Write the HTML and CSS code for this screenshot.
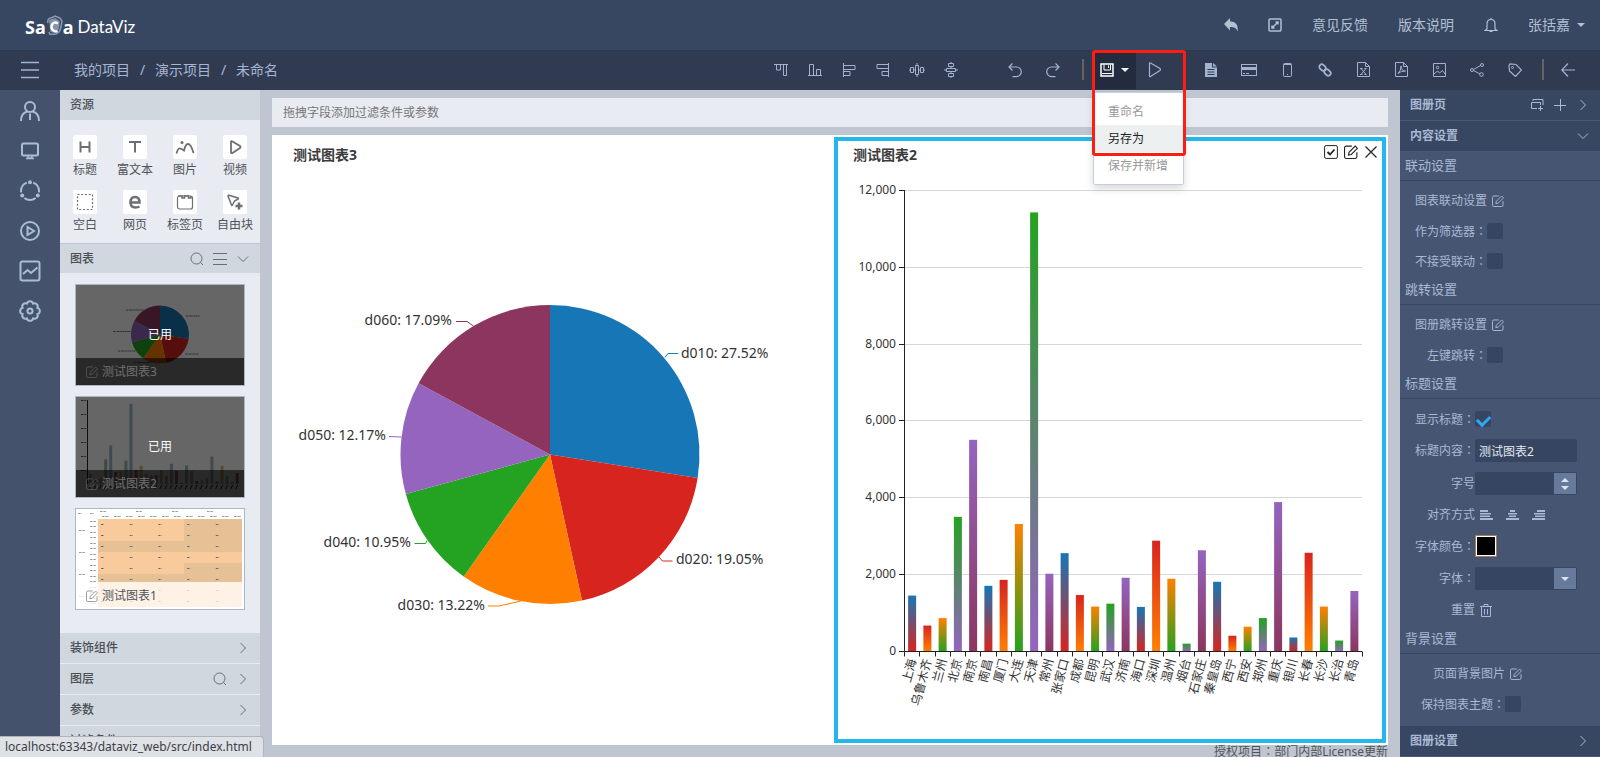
FILE: index.html
```html
<!doctype html>
<html lang="zh-CN">
    <head>
        <meta charset="UTF-8" />
        <meta name="viewport" content="width=device-width, initial-scale=1.0" />
        <title>SaCa DataViz</title>
        <link rel="stylesheet" href="styles.css">
    </head>
    <body>
        <!-- shared icons -->
        <svg class="sprite" aria-hidden="true">
            <symbol id="i-edit" viewBox="1 .5 12.500 12.500">
                <path d="M8 1.5H3A1.5 1.5 0 0 0 1.5 3v8A1.5 1.5 0 0 0 3 12.500h8A1.500 1.500 0 0 0 12.500 11V7" />
                <path d="M5 9.500l.5-2.500 5.500-5.500 2 2L7.500 9z" />
            </symbol>
            <symbol id="i-search" viewBox="0 0 14 14">
                <circle cx="6.500" cy="6.500" r="5.500" />
                <path d="M10.500 10.500l2.500 2.500" />
            </symbol>
            <symbol id="i-right" viewBox="0 0 14 14">
                <path d="M4.500 2l5 5-5 5" />
            </symbol>
            <symbol id="i-down" viewBox="0 0 14 14">
                <path d="M2 4.500l5 5 5-5" />
            </symbol>
        </svg>

        <header class="topbar">
            <div class="logo">
                <b>Sa</b>
                <svg width="17" height="20" viewBox="0 0 17 20">
                    <path d="M2 8Q1 3 6 2.500L9 1l5 2 2 3-1 6-1.500 4.500L10 19l-6 .5L3 17" fill="none" stroke="#8f9cb0" stroke-width="1.500" />
                    <path d="M3 5l6-2 4.500 3v4l-1 5-4 3-4-1z" fill="#8593a9" stroke="none" />
                    <path d="M12 8.500Q7.500 6 6 10t1.500 5.500q2 1.500 4 .5" fill="none" stroke="#fff" stroke-width="2.500" />
                </svg>
                <b>a</b>
                <span class="logo-name">DataViz</span>
            </div>
            <nav class="top-links">
                <button aria-label="返回">
                    <svg width="14" height="14" viewBox="0 0 14 14"><path class="fill" d="M6 0v3.500c6 0 8.500 3.500 7.500 10-1-3.500-3-4.500-7.500-4.500v3.500L0 6z" /></svg>
                </button>
                <button aria-label="全屏">
                    <svg width="14" height="14" viewBox="0 0 14 14"><rect x="1" y="1" width="12" height="12" rx="1" stroke-width="1.500" /><path d="M4 10l6-6M7.500 4H10v2.500M4 7.500V10h2.500" stroke-width="1.500" /></svg>
                </button>
                <a href="#">意见反馈</a>
                <a href="#">版本说明</a>
                <button aria-label="通知">
                    <svg width="14" height="16" viewBox="0 0 14 16"><path d="M7 1v1M3 12V7q0-4.500 4-4.500T11 7v5l2 1.500H1zM5.500 14.500h3" stroke-width="1.200" /></svg>
                </button>
                <button class="user">张括嘉 <i class="caret"></i></button>
            </nav>
        </header>

        <div class="toolbar">
            <button class="menu-btn" aria-label="菜单">
                <svg width="20" height="18" viewBox="0 0 20 18"><path d="M1 1.500h18M1 9h18M1 16.500h18" stroke-width="1.500" /></svg>
            </button>
            <div class="crumbs">
                <a href="#">我的项目</a><span>/</span><a href="#">演示项目</a><span>/</span><a href="#">未命名</a>
            </div>

            <div class="tools align-tools">
                <button aria-label="上对齐"><svg width="14" height="14" viewBox="0 0 14 14"><path d="M0 1.500h14M2.500 2v5h4V2M9.500 2v10.500h3V2" /></svg></button>
                <button aria-label="下对齐"><svg width="14" height="14" viewBox="0 0 14 14"><path d="M0 12.500h14M1.500 12V1.500h4V12M8.500 12V6.500h4V12" /></svg></button>
                <button aria-label="左对齐"><svg width="14" height="14" viewBox="0 0 14 14"><path d="M1.500 0v14M2 2.500h11v4H2M2 8.500h6v4H2" /></svg></button>
                <button aria-label="右对齐"><svg width="14" height="14" viewBox="0 0 14 14"><path d="M12.500 0v14M12 1.500H1v4h11M12 8.500H6v4h6" /></svg></button>
                <button aria-label="水平居中"><svg width="16" height="14" viewBox="0 0 16 14"><path d="M1.500 4.500h3v5h-3zM6.500 2.500h3v9h-3zM11.500 4.500h3v5h-3zM4.500 7h2M9.500 7h2M8 0v2M8 12v2M0 7h1M15 7h1" /></svg></button>
                <button aria-label="垂直居中"><svg width="14" height="16" viewBox="0 0 14 16"><path d="M4.500 1.500h5v3h-5zM2.500 6.500h9v3h-9zM4.500 11.500h5v3h-5zM7 4.500v2M7 9.500v2M0 8h2M12 8h2M7 0v1M7 15v1" /></svg></button>
            </div>
            <div class="tools">
                <button aria-label="撤销"><svg width="16" height="16" viewBox="0 0 16 16"><path d="M5.500 1.500L2 5l3.500 3.500M2 5h7.500a4.800 4.800 0 0 1 0 9.600H5.500" stroke-width="1.200" /></svg></button>
                <button aria-label="重做"><svg width="16" height="16" viewBox="0 0 16 16"><path d="M10.500 1.500L14 5l-3.500 3.500M14 5H6.500a4.800 4.800 0 0 0 0 9.600h4" stroke-width="1.200" /></svg></button>
            </div>
            <i class="divider"></i>
            <div class="save-wrap">
                <button class="save-btn" aria-label="保存">
                    <svg width="14" height="14" viewBox="0 0 14 14"><path d="M1 1h12v12H1z" stroke-width="1.500" /><path d="M4 1.500v5.500h6.500V1.500M8.500 2.500v2.500M2 10.500h10" /></svg>
                    <i class="caret"></i>
                </button>
                <ul class="dropdown">
                    <li><button>重命名</button></li>
                    <li class="active"><button>另存为</button></li>
                    <li><button>保存并新增</button></li>
                </ul>
                <div class="highlight"></div>
            </div>
            <div class="tools play">
                <button aria-label="预览"><svg width="14" height="16" viewBox="0 0 14 16"><path d="M1.500 1.500q0-1 1-.5L12 6.500q1 1 0 2L2.500 14.500q-1 .5-1-.5z" stroke-width="1.200" /></svg></button>
            </div>
            <div class="tools">
                <button aria-label="文档"><svg width="12" height="14" viewBox="0 0 12 14"><path class="fill" fill-rule="evenodd" d="M0 0h7v4.500h5V14H0zM8 0l4 3.500H8zM2.500 6v1h7V6zM2.500 8.500v1h7v-1zM2.500 11v1h7v-1z" /></svg></button>
                <button aria-label="卡片"><svg width="16" height="12" viewBox="0 0 16 12"><rect x=".5" y=".5" width="15" height="11" /><path class="fill" d="M0 3h16v3H0zM2 9h2v1H2zM5 9h3v1H5z" /></svg></button>
                <button aria-label="手机"><svg width="9" height="14" viewBox="0 0 9 14"><rect x=".5" y=".5" width="8" height="13" rx="1" /><path d="M1 1.500h7M4 11.500h1" /></svg></button>
                <button aria-label="链接"><svg width="14" height="14" viewBox="0 0 14 14"><g stroke-width="1.800"><rect x="1" y="2" width="7" height="5" rx="2.500" transform="rotate(45 4.500 4.500)" /><rect x="6" y="7" width="7" height="5" rx="2.500" transform="rotate(45 9.500 9.500)" /></g></svg></button>
                <button aria-label="导出Excel"><svg width="13" height="15" viewBox="0 0 13 15"><path d="M.5 .5h8l4 4v10H.5zM8.500 .5v4h4" /><path d="M4 6.500l5 6M9 6.500l-5 6M3 6.500h2.500M7.500 6.500h2M3 12.500h2.500M7.500 12.500h2" /></svg></button>
                <button aria-label="导出PDF"><svg width="13" height="15" viewBox="0 0 13 15"><path d="M.5 .5h8l4 4v10H.5zM8.500 .5v4h4" /><path d="M3 11.500q3-2.500 3-7.500 1 6 4.500 5-4-.5-7.500 2.500z" /></svg></button>
                <button aria-label="导出图片"><svg width="13" height="14" viewBox="0 0 13 14"><path d="M.5 .5h12v13H.5zM1 11l3.500-3 2 2 3-2.500L12 11" /><circle cx="4.500" cy="4.500" r="1.200" /></svg></button>
                <button aria-label="分享"><svg width="14" height="14" viewBox="0 0 14 14"><circle cx="2" cy="7" r="1.500" /><circle cx="12" cy="2" r="1.500" /><circle cx="11.500" cy="11.500" r="1.800" /><path d="M3.500 6.500l7-4M3.500 7.500l6.500 3.500" /></svg></button>
                <button aria-label="标签"><svg width="14" height="14" viewBox="0 0 14 14"><path d="M1 2.500l1-1.500 6 .5 5.500 5.500-6 6.500L1.500 8z" stroke-width="1.200" /><circle cx="4.500" cy="4.500" r="1" /></svg></button>
            </div>
            <i class="divider last"></i>
            <div class="tools back">
                <button aria-label="后退"><svg width="14" height="14" viewBox="0 0 14 14"><path d="M7 .5L.8 7 7 13.500M1 7h13" stroke-width="1.200" /></svg></button>
            </div>
        </div>

        <div class="layout">
            <nav class="sidenav">
                <button aria-label="用户"><svg width="22" height="22" viewBox="0 0 22 22"><circle cx="11" cy="7" r="5" /><path d="M2 21q0-8 6.500-9.500M20 21q0-8-6.500-9.500M11 13.500V20" /></svg></button>
                <button aria-label="大屏"><svg width="20" height="18" viewBox="0 0 20 18"><rect x="2" y="1.500" width="16" height="12" rx="1.500" /><path d="M8 14v2h4v-2M6 16.500h8" stroke-width="1.500" /></svg></button>
                <button aria-label="关系"><svg width="22" height="22" viewBox="0 0 22 22"><circle cx="11" cy="11" r="9" pathLength="120" stroke-dasharray="26 14" stroke-dashoffset="-7" transform="rotate(-90 11 11)" /><circle class="fill" cx="11" cy="2.200" r="2" /><circle class="fill" cx="3.200" cy="15.500" r="2" /><circle class="fill" cx="18.800" cy="15.500" r="2" /></svg></button>
                <button aria-label="播放"><svg width="22" height="22" viewBox="0 0 22 22"><circle cx="11" cy="11" r="9" /><path d="M8.500 7v8l6.500-4z" /></svg></button>
                <button aria-label="图表"><svg width="22" height="22" viewBox="0 0 22 22"><rect x="1.500" y="1.500" width="19" height="19" rx="2" /><path d="M4 14l4.500-4 3.500 3 6.500-5.500" /></svg></button>
                <button aria-label="设置"><svg width="22" height="22" viewBox="0 0 22 22"><circle cx="11" cy="11" r="2.500" /><path d="M18.400 14.100A3.200 3.200 0 0 1 14.100 18.400A3.200 3.200 0 0 1 7.900 18.400A3.200 3.200 0 0 1 3.600 14.100A3.200 3.200 0 0 1 3.600 7.900A3.200 3.200 0 0 1 7.900 3.600A3.200 3.200 0 0 1 14.100 3.600A3.200 3.200 0 0 1 18.400 7.900A3.200 3.200 0 0 1 18.400 14.100z" /></svg></button>
            </nav>

            <aside class="resources">
                <h2 class="bar">资源</h2>
                <div class="res-grid">
                    <button><span class="tile"><svg width="18" height="18" viewBox="0 0 18 18"><path d="M4.500 3.500v11M13.500 3.500v11M4.500 9h9" stroke-width="2" /></svg></span>标题</button>
                    <button><span class="tile"><svg width="18" height="18" viewBox="0 0 18 18"><path d="M3 4h12M9 4v10.500" stroke-width="2" /></svg></span>富文本</button>
                    <button><span class="tile"><svg width="20" height="18" viewBox="0 0 20 18"><path d="M1.500 15.500q1.500-5.500 3.500-5t4 2q1.500-6.500 4-6.500 3 0 5.500 9" stroke-width="1.800" /><circle class="fill" cx="7" cy="4.500" r="1.500" /></svg></span>图片</button>
                    <button><span class="tile"><svg width="18" height="18" viewBox="0 0 18 18"><path d="M5 3.500q.5-.8 1.500 0L14 8q1 1 0 2l-7.500 5q-1 .5-1.500-.5z" stroke-width="1.800" /></svg></span>视频</button>
                    <button><span class="tile"><svg width="18" height="18" viewBox="0 0 18 18"><rect x="1.500" y="1.500" width="15" height="15" stroke-dasharray="2 1.750" stroke-width="1.200" /></svg></span>空白</button>
                    <button><span class="tile"><svg width="18" height="18" viewBox="0 0 18 18"><path d="M4.500 9.500h9q0-5.500-4.500-5.500t-4.500 5.500q0 5 5 5 2 0 4-1" stroke-width="2.500" /></svg></span>网页</button>
                    <button><span class="tile"><svg width="18" height="18" viewBox="0 0 18 18"><rect x="1.500" y="3" width="15" height="13" rx="2" stroke-width="1.200" /><path d="M2 3h4v2h2.500V3h4v2H15V3" stroke-width="1.500" /></svg></span>标签页</button>
                    <button><span class="tile"><svg width="18" height="18" viewBox="0 0 18 18"><path d="M2 3q0-1 1-.7l9 2.700q.8.500 0 1L8.500 8l-2 4q-.5.800-1 0z" stroke-width="1.500" /><path d="M13 9.500v7M9.500 13h7" stroke-width="2.500" /></svg></span>自由块</button>
                </div>
                <h2 class="bar ruled">图表
                    <span class="bar-icons">
                        <button aria-label="搜索"><svg width="14" height="14"><use href="#i-search" /></svg></button>
                        <button aria-label="列表"><svg width="14" height="14" viewBox="0 0 14 14"><path d="M0 1.500h14M0 7.500h14M0 12.500h14" /></svg></button>
                        <button class="arrow" aria-label="收起"><svg width="14" height="14"><use href="#i-down" /></svg></button>
                    </span>
                </h2>
                <div class="thumbs">
                    <div class="thumb used">
                        <svg id="thumbPie" viewBox="0 0 168 100"></svg>
                        <div class="caption"><svg width="12" height="12"><use href="#i-edit" /></svg>测试图表3</div>
                        <div class="mask">已用</div>
                    </div>
                    <div class="thumb used">
                        <svg id="thumbBar" viewBox="0 0 168 100"></svg>
                        <div class="caption"><svg width="12" height="12"><use href="#i-edit" /></svg>测试图表2</div>
                        <div class="mask">已用</div>
                    </div>
                    <div class="thumb">
                        <svg id="thumbTable" viewBox="0 0 168 100"></svg>
                        <div class="caption"><svg width="12" height="12"><use href="#i-edit" /></svg>测试图表1</div>
                    </div>
                </div>
                <div class="folded">
                    <h2 class="bar">装饰组件
                        <span class="bar-icons"><button class="arrow" aria-label="展开"><svg width="14" height="14"><use href="#i-right" /></svg></button></span>
                    </h2>
                    <h2 class="bar">图层
                        <span class="bar-icons">
                            <button aria-label="搜索"><svg width="14" height="14"><use href="#i-search" /></svg></button>
                            <button class="arrow" aria-label="展开"><svg width="14" height="14"><use href="#i-right" /></svg></button>
                        </span>
                    </h2>
                    <h2 class="bar">参数
                        <span class="bar-icons"><button class="arrow" aria-label="展开"><svg width="14" height="14"><use href="#i-right" /></svg></button></span>
                    </h2>
                    <h2 class="bar">过滤条件</h2>
                </div>
            </aside>

            <main class="stage">
                <input class="filter" type="text" aria-label="过滤条件或参数" placeholder="拖拽字段添加过滤条件或参数" />
                <div class="canvas">
                    <section class="panel">
                        <div class="panel-head"><h3>测试图表3</h3></div>
                        <svg id="pieChart" class="chart" viewBox="0 0 544 570"></svg>
                    </section>
                    <section class="panel selected">
                        <div class="panel-head">
                            <h3>测试图表2</h3>
                            <button aria-label="选中"><svg width="14" height="14" viewBox="0 0 14 14"><rect x=".6" y=".6" width="12.800" height="12.800" rx="1.500" /><path d="M3.500 7L6 9.500l4.500-5" stroke-width="1.800" /></svg></button>
                            <button aria-label="编辑"><svg width="14" height="14"><use href="#i-edit" /></svg></button>
                            <button aria-label="关闭"><svg width="14" height="14" viewBox="0 0 14 14"><path d="M1.500 1.500l11 11M12.500 1.500l-11 11" stroke-width="1.200" /></svg></button>
                        </div>
                        <svg id="barChart" class="chart" viewBox="0 0 544 570"></svg>
                    </section>
                </div>
                <footer>授权项目<span class="colon">：</span>部门内部License更新</footer>
            </main>

            <aside class="settings">
                <h2 class="set-bar">图册页
                    <span class="bar-icons">
                        <button aria-label="复制页"><svg width="14" height="14" viewBox="0 0 14 14"><path d="M3 3V1.500h10V7M7 10.500H1.500v-6h9V7M10.500 8v5M8 10.500h5" /></svg></button>
                        <button aria-label="新增页"><svg width="14" height="14" viewBox="0 0 14 14"><path d="M7.500 1v12M1 7.500h12" /></svg></button>
                        <button class="arrow" aria-label="展开"><svg width="14" height="14"><use href="#i-right" /></svg></button>
                    </span>
                </h2>
                <h2 class="set-bar">内容设置
                    <span class="bar-icons"><button class="arrow" aria-label="收起"><svg width="14" height="14"><use href="#i-down" /></svg></button></span>
                </h2>
                <div class="set-body">
                    <h3>联动设置</h3>
                    <div class="group wide">
                        <div class="row"><span class="label">图表联动设置</span><button class="ico" aria-label="编辑"><svg width="12" height="12"><use href="#i-edit" /></svg></button></div>
                        <div class="row"><label class="label" for="asFilter">作为筛选器<span class="colon">：</span></label><input type="checkbox" id="asFilter" /></div>
                        <div class="row"><label class="label" for="noLink">不接受联动<span class="colon">：</span></label><input type="checkbox" id="noLink" /></div>
                    </div>
                    <h3>跳转设置</h3>
                    <div class="group wide">
                        <div class="row"><span class="label">图册跳转设置</span><button class="ico" aria-label="编辑"><svg width="12" height="12"><use href="#i-edit" /></svg></button></div>
                        <div class="row"><label class="label" for="leftJump">左键跳转<span class="colon">：</span></label><input type="checkbox" id="leftJump" /></div>
                    </div>
                    <h3>标题设置</h3>
                    <div class="group">
                        <div class="row"><label class="label" for="showTitle">显示标题<span class="colon">：</span></label><input type="checkbox" id="showTitle" checked /></div>
                        <div class="row tall"><label class="label" for="titleText">标题内容<span class="colon">：</span></label><input class="field" type="text" id="titleText" value="测试图表2" /></div>
                        <div class="row tall">
                            <label class="label" for="fontSize">字号</label>
                            <span class="combo"><input class="field" type="text" id="fontSize" /><button aria-label="调整字号"><i class="caret up"></i><i class="caret"></i></button></span>
                        </div>
                        <div class="row">
                            <span class="label">对齐方式</span>
                            <span class="aligns">
                                <button aria-label="左"><svg width="13" height="10" viewBox="0 0 13 10"><path class="fill" d="M0 0h8v2H0zM0 3h11v1.500H0zM0 5.500h10v1.500H0zM0 8h13v2H0z" /></svg></button>
                                <button aria-label="中"><svg width="13" height="10" viewBox="0 0 13 10"><path class="fill" d="M4 0h5v2H4zM2 3h9v1.500H2zM3 5.500h7v1.500H3zM0 8h13v2H0z" /></svg></button>
                                <button aria-label="右"><svg width="13" height="10" viewBox="0 0 13 10"><path class="fill" d="M5 0h8v2H5zM2 3h11v1.500H2zM3 5.500h10v1.500H3zM0 8h13v2H0z" /></svg></button>
                            </span>
                        </div>
                        <div class="row mid"><label class="label" for="fontColor">字体颜色<span class="colon">：</span></label><input type="color" id="fontColor" value="#000000" /></div>
                        <div class="row tall">
                            <label class="label" for="fontFamily">字体<span class="colon">：</span></label>
                            <span class="combo"><select class="field" id="fontFamily"><option></option></select><span class="combo-arrow"><i class="caret"></i></span></span>
                        </div>
                        <div class="row"><span class="label">重置</span><button class="ico" aria-label="重置"><svg width="12" height="13" viewBox="0 0 12 13"><path d="M0 2.500h12M4 2V.5h4V2M1.500 3v9.500h9V3M4.500 5v5.500M7.500 5v5.500" /></svg></button></div>
                    </div>
                    <h3>背景设置</h3>
                    <div class="group wider">
                        <div class="row"><span class="label">页面背景图片</span><button class="ico" aria-label="编辑"><svg width="12" height="12"><use href="#i-edit" /></svg></button></div>
                        <div class="row"><label class="label" for="keepTheme">保持图表主题<span class="colon">：</span></label><input type="checkbox" id="keepTheme" /></div>
                    </div>
                </div>
                <h2 class="set-bar">图册设置
                    <span class="bar-icons"><button class="arrow" aria-label="展开"><svg width="14" height="14"><use href="#i-right" /></svg></button></span>
                </h2>
            </aside>
        </div>

        <div class="statusbar">localhost:63343/dataviz_web/src/index.html</div>

        <script src="script.js"></script>
    </body>
</html>
```
FILE: styles.css
```css
* {
    box-sizing: border-box;
}
body {
    display: flex;
    flex-direction: column;
    height: 100vh;
    margin: 0;
    overflow: hidden;
    background-color: #bfc6d1;
    color: #4f5358;
    font-family: "Noto Sans", "Noto Sans CJK SC", sans-serif;
    font-size: 12px;
    line-height: 18px;
}
h2,
h3,
ul {
    margin: 0;
    padding: 0;
    font-size: 12px;
    list-style: none;
}
a {
    color: inherit;
    text-decoration: none;
}
button {
    display: flex;
    align-items: center;
    justify-content: center;
    padding: 0;
    border: none;
    background: none;
    color: inherit;
    font: inherit;
    cursor: pointer;
}
svg {
    display: block;
    fill: none;
    stroke: currentColor;
}
.fill {
    fill: currentColor;
    stroke: none;
}
.sprite {
    position: absolute;
    width: 0;
    height: 0;
}
.caret {
    display: block;
    border: 4px solid transparent;
    border-top-color: currentColor;
    border-bottom: none;
}
.caret.up {
    border-top: none;
    border-bottom: 4px solid currentColor;
}
/* centred full-width colon */
.colon {
    font-family: "Noto Sans CJK TC", sans-serif;
    font-feature-settings: "locl" 0;
}

/* header */
.topbar {
    display: flex;
    align-items: center;
    justify-content: space-between;
    flex: none;
    height: 50px;
    padding: 0 15px 0 25px;
    background-color: #374761;
    color: #b3c0d3;
    font-size: 14px;
}
.logo {
    display: flex;
    align-items: center;
    padding-top: 4px;
    color: #fff;
    font-size: 18px;
    line-height: 20px;
}
.logo svg {
    margin-top: -4px;
}
.logo-name {
    margin-left: 4px;
    font-family: Lato, sans-serif;
    font-size: 17px;
}
.top-links {
    display: flex;
    align-items: center;
    gap: 30px;
}
.user {
    gap: 7px;
}

/* toolbar */
.toolbar {
    display: flex;
    align-items: center;
    flex: none;
    height: 40px;
    padding: 0 13px 1px 0;
    background-color: #303b52;
    box-shadow: inset 0 1px #2c3950;
    color: #a3b3cf;
}
.menu-btn {
    width: 60px;
    height: 39px;
}
.crumbs {
    display: flex;
    margin: 0 auto 0 14px;
    color: #a5b5d2;
    font-size: 14px;
}
.crumbs span {
    width: 25px;
    text-align: center;
}
.tools {
    display: flex;
}
.tools button {
    width: 38px;
    height: 39px;
}
.align-tools {
    margin-right: 28px;
}
.align-tools button {
    width: 34px;
}
.divider {
    width: 2px;
    height: 21px;
    margin: 0 9px 0 10px;
    background-color: #66645f;
}
.divider.last {
    margin: 0 5px 0 8px;
}
.play {
    margin-right: 18px;
}
.save-wrap {
    position: relative;
}
.save-btn {
    gap: 7px;
    width: 43px;
    height: 39px;
    background-color: #222c3e;
    color: #fff;
}
.dropdown {
    position: absolute;
    top: 42px;
    left: 0;
    z-index: 2;
    width: 91px;
    padding: 5px 0;
    border: 1px solid #c3cfdc;
    border-radius: 2px;
    background-color: #fff;
    box-shadow: 0 4px 8px rgba(0, 0, 0, 0.15);
    color: #999;
}
.dropdown button {
    justify-content: flex-start;
    width: 100%;
    height: 27px;
    padding-left: 14px;
}
.dropdown .active {
    background-color: #ecf0f1;
    color: #222;
}
.highlight {
    position: absolute;
    top: 0;
    left: -1px;
    z-index: 3;
    width: 94px;
    height: 106px;
    border: 3px solid #ff1d12;
    border-radius: 3px;
    pointer-events: none;
}

/* columns */
.layout {
    display: flex;
    flex: 1;
    min-height: 0;
}
.sidenav {
    flex: none;
    width: 60px;
    padding-top: 1px;
    background-color: #44526b;
    color: #a9bdd6;
    stroke-width: 2;
}
.sidenav button {
    width: 60px;
    height: 40px;
}

/* resources column */
.resources {
    display: flex;
    flex-direction: column;
    flex: none;
    width: 200px;
    overflow: hidden;
    background-color: #e8ebf1;
}
.bar {
    display: flex;
    align-items: center;
    justify-content: space-between;
    flex: none;
    height: 30px;
    padding: 0 10px;
    background-color: #d0d7df;
    color: #4b4f54;
    font-weight: 500;
}
.bar.ruled {
    border-top: 1px solid #bcc7d3;
}
.bar-icons {
    display: flex;
    align-items: center;
    gap: 9px;
    color: #6a6e73;
}
.res-grid {
    display: grid;
    grid-template-columns: repeat(4, 50px);
    row-gap: 10px;
    padding: 15px 0 8px;
}
.res-grid button {
    flex-direction: column;
    justify-content: flex-start;
    gap: 2px;
    height: 45px;
}
.tile {
    display: flex;
    align-items: center;
    justify-content: center;
    width: 24px;
    height: 24px;
    border-radius: 2px;
    background-color: #fff;
    color: #6c6f73;
}
.thumbs {
    display: flex;
    flex: 1;
    flex-direction: column;
    gap: 10px;
    min-height: 0;
    padding: 11px 15px 0;
}
.thumb {
    position: relative;
    flex: none;
    overflow: hidden;
    border: 1px solid #a9b7c6;
    background-color: #fff;
}
.thumb > svg {
    width: 100%;
    stroke: none;
}
.caption {
    position: absolute;
    right: 0;
    bottom: 0;
    left: 0;
    display: flex;
    align-items: center;
    gap: 4px;
    height: 27px;
    padding-left: 10px;
    background-color: rgba(255, 255, 255, 0.75);
}
.caption svg {
    opacity: 0.6;
}
.mask {
    position: absolute;
    inset: 0;
    display: flex;
    align-items: center;
    justify-content: center;
    color: #fff;
}
.used .caption {
    background-color: rgba(0, 0, 0, 0.6);
    color: #707070;
}
.used > svg {
    filter: brightness(0.4);
    background-color: #fff;
}
.folded {
    flex: none;
    height: 124px;
    overflow: hidden;
}
.folded .bar {
    margin-bottom: 1px;
}

/* centre */
.stage {
    display: flex;
    flex: 1;
    flex-direction: column;
    min-width: 0;
    padding: 8px 12px 0;
}
.filter {
    flex: none;
    height: 29px;
    margin-bottom: 8px;
    padding: 0 11px;
    border: none;
    background-color: #e8ebf1;
    font: inherit;
}
.filter::placeholder {
    color: #777;
}
.canvas {
    display: flex;
    flex: 1;
    gap: 8px;
    min-height: 0;
    padding: 2px;
    background-color: #fff;
}
.panel {
    display: flex;
    flex: 1;
    flex-direction: column;
    min-width: 0;
    border: 4px solid transparent;
}
.panel.selected {
    border-color: #23b7ee;
}
.panel-head {
    display: flex;
    align-items: center;
    gap: 6px;
    flex: none;
    height: 28px;
    padding: 0 4px 0 15px;
    color: #333;
}
.panel-head h3 {
    flex: 1;
    color: #3b3b3b;
    font-size: 14px;
    font-weight: bold;
}
.panel-head button {
    align-self: flex-start;
    margin-top: 4px;
    color: #222;
}
.chart {
    flex: 1;
    width: 100%;
    min-height: 0;
}
.chart text {
    fill: #333;
    stroke: none;
}
.pie-label {
    font-size: 14px;
}
.end {
    text-anchor: end;
}
footer {
    flex: none;
    height: 12px;
    line-height: 12px;
    text-align: right;
    white-space: nowrap;
}

/* settings column */
.settings {
    display: flex;
    flex-direction: column;
    flex: none;
    width: 200px;
    background-color: #465672;
    color: #a9b8d3;
}
.set-bar {
    display: flex;
    align-items: center;
    justify-content: space-between;
    flex: none;
    height: 31px;
    padding: 0 10px;
    border-bottom: 1px solid #465b7c;
    background-color: #374761;
    font-weight: bold;
}
.set-bar .bar-icons {
    color: #a9b8d3;
}
.set-body {
    flex: 1;
    min-height: 0;
    overflow: hidden;
}
.set-body h3 {
    height: 29px;
    padding-left: 5px;
    border-bottom: 1px solid #38465f;
    font-size: 13px;
    font-weight: normal;
    line-height: 26px;
}
.group {
    padding-top: 5px;
}
.row {
    display: flex;
    align-items: center;
    height: 30px;
}
.row.mid {
    height: 32px;
}
.row.tall {
    height: 33px;
}
.label {
    flex: none;
    width: 75px;
    text-align: right;
}
.wide .label {
    width: 87px;
}
.wider .label {
    width: 105px;
}
.ico {
    margin-left: 5px;
}
input[type="checkbox"] {
    display: flex;
    justify-content: center;
    width: 16px;
    height: 16px;
    margin: 0;
    padding-top: 4px;
    border-radius: 2px;
    background-color: #364560;
    appearance: none;
}
input[type="checkbox"]:checked::after {
    content: "";
    width: 10px;
    height: 6px;
    border: solid #2ea8f5;
    border-width: 0 0 3px 3px;
    transform: rotate(-45deg);
}
.field {
    width: 102px;
    height: 23px;
    padding: 0 4px;
    border: none;
    border-radius: 2px;
    background-color: #364560;
    color: #e2e8f0;
    font: inherit;
    appearance: none;
}
.combo {
    display: flex;
    width: 102px;
    padding-right: 1px;
    border-radius: 2px;
    background-color: #364560;
}
.combo .field {
    flex: 1;
    width: auto;
    min-width: 0;
}
.combo button,
.combo-arrow {
    display: flex;
    flex-direction: column;
    align-items: center;
    justify-content: center;
    gap: 4px;
    width: 22px;
    height: 21px;
    margin: 1px 0;
    background-color: #687a9b;
    color: #dde3ec;
}
.combo-arrow {
    pointer-events: none;
}
.aligns {
    display: flex;
    gap: 13px;
    padding-left: 5px;
}
input[type="color"] {
    width: 22px;
    height: 22px;
    padding: 0;
    border: 1px solid #a67c5c;
    background-color: #fff;
    appearance: none;
}
input[type="color"]::-webkit-color-swatch-wrapper {
    padding: 1px;
}
input[type="color"]::-webkit-color-swatch {
    border: none;
}

/* link preview */
.statusbar {
    position: absolute;
    bottom: 0;
    left: 0;
    z-index: 5;
    height: 21px;
    padding: 0 11px 0 5px;
    border: solid #b0b4ba;
    border-width: 1px 1px 0 0;
    border-radius: 0 4px 0 0;
    background-color: #dee1e6;
    color: #3c4043;
    line-height: 20px;
}
```
FILE: script.js
```js
const colors = ["#1776b6", "#d8241f", "#ff8000", "#24a221", "#9564bf", "#8c365f"];

const slices = [
    { name: "d010", value: 27.52, x: 403, y: 189, line: "387,188.500 390,184.500 400,184.500" },
    { name: "d020", value: 19.05, x: 398, y: 395, line: "381,388 384.500,392 394.500,392" },
    { name: "d030", value: 13.22, x: 207, y: 441, end: true, line: "243,432 221,437 210,437" },
    { name: "d040", value: 10.95, x: 133, y: 378, end: true, line: "149,371.500 147.500,374.500 136.500,374.500" },
    { name: "d050", value: 12.17, x: 108, y: 271, end: true, line: "123.500,268 111,267.500" },
    { name: "d060", value: 17.09, x: 174, y: 156, end: true, line: "195.500,157 189,152.500 178,152.500" },
];

const cities = [
    ["上海", 1455], ["乌鲁木齐", 675], ["兰州", 870], ["北京", 3505], ["南京", 5510],
    ["南昌", 1710], ["厦门", 1865], ["大连", 3320], ["天津", 11430], ["常州", 2025],
    ["张家口", 2560], ["成都", 1470], ["昆明", 1170], ["武汉", 1245], ["济南", 1920],
    ["海口", 1160], ["深圳", 2885], ["温州", 1895], ["烟台", 205], ["石家庄", 2635],
    ["秦皇岛", 1815], ["西宁", 410], ["西安", 645], ["郑州", 870], ["重庆", 3890],
    ["银川", 365], ["长春", 2570], ["长沙", 1170], ["长治", 285], ["青岛", 1575],
];

function pieSlices(cx, cy, r) {
    const total = slices.reduce((sum, s) => sum + s.value, 0);
    let angle = -Math.PI / 2;
    return slices
        .map((s, i) => {
            const next = angle + (s.value / total) * Math.PI * 2;
            const d =
                `M${cx} ${cy}L${cx + r * Math.cos(angle)} ${cy + r * Math.sin(angle)}` +
                `A${r} ${r} 0 0 1 ${cx + r * Math.cos(next)} ${cy + r * Math.sin(next)}Z`;
            angle = next;
            return `<path d="${d}" fill="${colors[i]}" stroke="none"/>`;
        })
        .join("");
}

function drawPie() {
    let out = pieSlices(272, 285.5, 149.5);
    slices.forEach((s, i) => {
        out += `<polyline points="${s.line}" stroke="${colors[i]}"/>`;
        out += `<text class="pie-label${s.end ? " end" : ""}" x="${s.x}" y="${s.y}">${s.name}: ${s.value}%</text>`;
    });
    document.getElementById("pieChart").innerHTML = out;
}

function drawBars() {
    const left = 66.5;
    const right = 524;
    const bottom = 482.5;
    const plot = 461;
    const step = (right - left) / cities.length;
    let out = "<defs>";
    for (let i = 0; i < 5; i++) {
        out +=
            `<linearGradient id="g${i}" x1="0" y1="0" x2="0" y2="1">` +
            `<stop offset="0" stop-color="${colors[i]}"/><stop offset="1" stop-color="${colors[i + 1]}"/></linearGradient>`;
    }
    out += "</defs>";

    for (let i = 0; i <= 6; i++) {
        const y = bottom - Math.round((i * plot) / 6);
        if (i) out += `<path d="M${left} ${y}H${right}" stroke="#d6d6d6"/>`;
        out += `<path d="M61 ${y}h5" stroke="#222"/>`;
        out += `<text class="end" x="58" y="${y + 3}">${(i * 2000).toLocaleString("en-US")}</text>`;
    }
    cities.forEach(([name, value], i) => {
        const cx = left + step * (i + 0.5);
        const h = (value / 12000) * plot;
        out += `<rect x="${cx - 4}" y="${bottom - h}" width="8" height="${h}" fill="url(#g${i % 5})" stroke="none"/>`;
        out += `<text class="end" dominant-baseline="central" transform="translate(${cx} 490) rotate(-75)">${name}</text>`;
    });
    out += `<path d="M${left} 21V${bottom}H${right}" stroke="#222"/>`;
    for (let i = 0; i <= cities.length; i++) {
        out += `<path d="M${Math.floor(left + step * i) + 0.5} ${bottom}v5" stroke="#222"/>`;
    }
    document.getElementById("barChart").innerHTML = out;
}

// short dashes standing in for text that is too small to read
function specks(x, y, w, color) {
    return `<path d="M${x} ${y}h${w}" stroke="${color}" stroke-width="1" stroke-dasharray="2 .5 1 .3"/>`;
}

function drawThumbs() {
    let pie = pieSlices(84, 49.5, 29);
    [[50, 25, 18], [37, 46.5, 18], [42, 66, 18], [58, 77.5, 18], [110, 31, 14], [109, 69, 14]].forEach(
        ([x, y, w]) => (pie += specks(x, y, w, "#777")),
    );
    document.getElementById("thumbPie").innerHTML = pie;

    const muted = ["#9fb8d0", "#cf6a70", "#d8bd6a", "#9dbd98"];
    let bars = '<path d="M11.500 3v84" stroke="#222"/>';
    for (let i = 0; i < 6; i++) {
        bars += specks(5, 3.5 + i * 14, 5, "#555");
    }
    cities.forEach(([, value], i) => {
        const h = (value / 11400) * 80;
        bars += `<rect x="${13 + i * 5.06}" y="${87 - h}" width="3" height="${h}" fill="${muted[i % 4]}"/>`;
        bars += `<path d="M${15 + i * 5.06} 88l-2 4" stroke="#222"/>`;
    });
    document.getElementById("thumbBar").innerHTML = bars;

    let table = '<rect x="22" y="10" width="144" height="88" fill="#f9cb9c"/>';
    [[108, 10, 58, 22], [22, 32, 144, 11], [108, 54, 58, 11], [22, 65, 144, 8]].forEach(
        ([x, y, w, h]) => (table += `<rect x="${x}" y="${y}" width="${w}" height="${h}" fill="#e6c196"/>`),
    );
    for (let x = 26; x < 160; x += 12) {
        table += specks(x, 7.5, 7, "#999");
    }
    [24, 60, 96, 131].forEach((x) => (table += specks(x, 2.5, 6, "#999")));
    table += specks(2, 4.5, 4, "#999") + specks(14, 4.5, 4, "#999");
    for (let r = 0; r < 8; r++) {
        const y = 15.5 + r * 11;
        for (let c = 0; c < 5; c++) {
            table += specks(25 + c * 28.7, y, 3, "#666");
        }
        table += specks(14, y - 3, 6, "#999") + specks(14, y + 2, 6, "#999");
        if (r % 2 === 0) table += specks(3, y + 6, 6, "#999");
    }
    document.getElementById("thumbTable").innerHTML = table;
}

drawPie();
drawBars();
drawThumbs();
```
